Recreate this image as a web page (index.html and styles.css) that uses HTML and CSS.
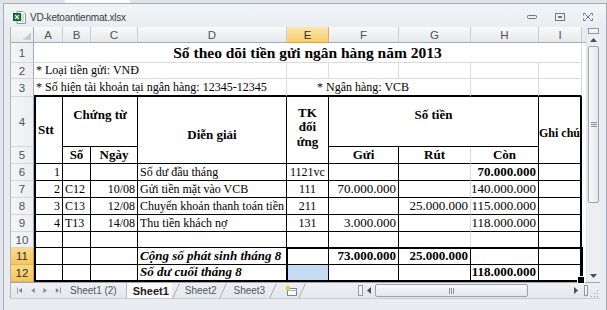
FILE: index.html
```html
<!DOCTYPE html>
<html>
<head>
<meta charset="utf-8">
<link rel="stylesheet" href="styles.css">
</head>
<body>
<div class="topstrip"><div class="toptab"></div></div>
<div class="window">
  <div class="titlebar">
    <svg class="xlicon" width="13" height="13" viewBox="0 0 13 13">
      <path d="M4 0.5h6l2.5 2.5v9.5h-8.5z" fill="#fff" stroke="#8a96a3"/>
      <path d="M7 4h4M7 6h4M7 8h4M7 10h4" stroke="#9bc29b" stroke-width="1"/>
      <rect x="0.5" y="2.5" width="7" height="7" fill="#1f7a3a" stroke="#145a2a"/>
      <path d="M2.2 4.2l3.6 3.6M5.8 4.2l-3.6 3.6" stroke="#fff" stroke-width="1.2"/>
    </svg>
    <span class="wtitle">VD-ketoantienmat.xlsx</span>
    <div class="wctl">
      <svg width="10" height="6" viewBox="0 0 10 6"><rect x="0.5" y="1.5" width="9" height="3" rx="1" fill="none" stroke="#6f7782"/></svg>
      <svg width="10" height="8" viewBox="0 0 10 8"><rect x="0.5" y="0.5" width="9" height="7" fill="none" stroke="#6f7782"/><rect x="3" y="3" width="4" height="2" fill="#6f7782"/></svg>
      <svg width="10" height="8" viewBox="0 0 10 8"><path d="M0.5 2.5v-2h2M7.5 0.5h2v2M9.5 5.5v2h-2M2.5 7.5h-2v-2M2.5 1.5l5 5M7.5 1.5l-5 5" fill="none" stroke="#6f7782"/></svg>
    </div>
  </div>
  <div class="main">
    <div class="sheet">
      <div class="corner"><svg width="8" height="8" viewBox="0 0 8 8"><path d="M8 0V8H0z" fill="#c9ccd1"/></svg></div>
      <div class="hc">A</div><div class="hc">B</div><div class="hc">C</div><div class="hc">D</div><div class="hc sel">E</div><div class="hc">F</div><div class="hc">G</div><div class="hc">H</div><div class="hc">I</div>

      <div class="rh">1</div>
      <div class="c title span9">Sổ theo dõi tiền gửi ngân hàng năm 2013</div>

      <div class="rh">2</div>
      <div class="c span4">* Loại tiền gửi: VNĐ</div>
      <div class="c"></div><div class="c"></div><div class="c"></div><div class="c"></div><div class="c"></div>

      <div class="rh">3</div>
      <div class="c span4 b2">* Số hiện tài khoản tại ngân hàng: 12345-12345</div>
      <div class="c span3 b2 indent">* Ngân hàng: VCB</div>
      <div class="c b2"></div><div class="c b2"></div>

      <div class="rh">4</div>
      <div class="c h rspan2 l2 r1 b1 stt">Stt</div>
      <div class="c h span2 r1 b1 up">Chứng từ</div>
      <div class="c h rspan2 r1 b1 down">Diễn giải</div>
      <div class="c h rspan2 r1 b1 wrap">TK<br>đối<br>ứng</div>
      <div class="c h span3 r1 b1 up">Số tiền</div>
      <div class="c h rspan2 r2 b1 ghichu">Ghi chú</div>

      <div class="rh">5</div>
      <div class="c h r1 b1">Số</div>
      <div class="c h r1 b1">Ngày</div>
      <div class="c h r1 b1">Gửi</div>
      <div class="c h b1">Rút</div>
      <div class="c h r1 b1">Còn</div>

      <div class="rh">6</div>
      <div class="c l2 r1 b1 ar">1</div><div class="c r1 b1"></div><div class="c r1 b1"></div>
      <div class="c r1 b1">Số dư đầu tháng</div><div class="c r1 b1 ac">1121vc</div>
      <div class="c r1 b1"></div><div class="c b1"></div><div class="c r1 b1 n bold">70.000.000</div><div class="c r2 b1"></div>

      <div class="rh">7</div>
      <div class="c l2 r1 b1 ar">2</div><div class="c r1 b1">C12</div><div class="c r1 b1 ar">10/08</div>
      <div class="c r1 b1">Gửi tiền mặt vào VCB</div><div class="c r1 b1 ac">111</div>
      <div class="c r1 b1 n">70.000.000</div><div class="c b1"></div><div class="c r1 b1 n">140.000.000</div><div class="c r2 b1"></div>

      <div class="rh">8</div>
      <div class="c l2 r1 b1 ar">3</div><div class="c r1 b1">C13</div><div class="c r1 b1 ar">12/08</div>
      <div class="c r1 b1">Chuyển khoản thanh toán tiền mua hàng</div><div class="c r1 b1 ac">211</div>
      <div class="c r1 b1"></div><div class="c b1 n">25.000.000</div><div class="c r1 b1 n">115.000.000</div><div class="c r2 b1"></div>

      <div class="rh">9</div>
      <div class="c l2 r1 b1 ar">4</div><div class="c r1 b1">T13</div><div class="c r1 b1 ar">14/08</div>
      <div class="c r1 b1">Thu tiền khách nợ</div><div class="c r1 b1 ac">131</div>
      <div class="c r1 b1 n">3.000.000</div><div class="c b1"></div><div class="c r1 b1 n">118.000.000</div><div class="c r2 b1"></div>

      <div class="rh">10</div>
      <div class="c l2 r1 b1"></div><div class="c r1 b1"></div><div class="c r1 b1"></div>
      <div class="c r1 b1"></div><div class="c r1 b1"></div>
      <div class="c r1 b1"></div><div class="c b1"></div><div class="c r1 b1"></div><div class="c r2 b1"></div>

      <div class="rh sel">11</div>
      <div class="c l2 r1 b1"></div><div class="c r1 b1"></div><div class="c r1 b1"></div>
      <div class="c r1 b1 bi">Cộng số phát sinh tháng 8</div><div class="c r1 b1"></div>
      <div class="c r1 b1 n bold">73.000.000</div><div class="c r1 b1 n bold">25.000.000</div><div class="c r1 b1"></div><div class="c r2 b1"></div>

      <div class="rh sel">12</div>
      <div class="c l2 r1 b2"></div><div class="c r1 b2"></div><div class="c r1 b2"></div>
      <div class="c r1 b2 bi">Số dư cuối tháng 8</div><div class="c r1 b2 selfill"></div>
      <div class="c r1 b2"></div><div class="c r1 b2"></div><div class="c r1 b2 n bold">118.000.000</div><div class="c r2 b2"></div>

      <div class="selection"></div>
    </div>
    <div class="filler"></div>
    <div class="vscroll">
      <div class="vsplit"></div>
      <div class="vbtn"><svg width="7" height="4" viewBox="0 0 7 4"><path d="M0 4L3.5 0L7 4z" fill="#4a4f56"/></svg></div>
      <div class="vthumb"><svg width="6" height="5" viewBox="0 0 6 5"><path d="M0 0.5h6M0 2.5h6M0 4.5h6" stroke="#8b939d"/></svg></div>
      <div class="vtrack"></div>
      <div class="vbtn"><svg width="7" height="4" viewBox="0 0 7 4"><path d="M0 0L3.5 4L7 0z" fill="#4a4f56"/></svg></div>
    </div>
  </div>
  <div class="tabbar">
    <div class="nav">
      <svg width="7" height="7" viewBox="0 0 7 7"><path d="M0.5 0v7" stroke="#7d848d"/><path d="M6 0.5L2 3.5L6 6.5z" fill="#7d848d"/></svg>
      <svg width="5" height="7" viewBox="0 0 5 7"><path d="M4.5 0.5L0.5 3.5L4.5 6.5z" fill="#7d848d"/></svg>
      <svg width="5" height="7" viewBox="0 0 5 7"><path d="M0.5 0.5L4.5 3.5L0.5 6.5z" fill="#7d848d"/></svg>
      <svg width="7" height="7" viewBox="0 0 7 7"><path d="M1 0.5L5 3.5L1 6.5z" fill="#7d848d"/><path d="M6.5 0v7" stroke="#7d848d"/></svg>
    </div>
    <div class="tabs">
      <div class="tab t1">Sheet1 (2)</div>
      <div class="tab active">Sheet1</div>
      <svg class="sep" width="8" height="16" viewBox="0 0 8 16"><path d="M0.5 15.5L7.5 0.5" stroke="#a7aeb7"/></svg>
      <div class="tab t2">Sheet2</div>
      <svg class="sep" width="8" height="16" viewBox="0 0 8 16"><path d="M0.5 15.5L7.5 0.5" stroke="#a7aeb7"/></svg>
      <div class="tab t3">Sheet3</div>
      <svg class="sep" width="8" height="16" viewBox="0 0 8 16"><path d="M0.5 15.5L7.5 0.5" stroke="#a7aeb7"/></svg>
      <svg class="ins" width="12" height="11" viewBox="0 0 12 11"><rect x="2.5" y="3.5" width="9" height="7" fill="#fff" stroke="#6d86a6"/><path d="M2.5 5.5h9" stroke="#9fb6d3"/><circle cx="3" cy="3" r="2.3" fill="#f6c343"/></svg>
      <svg class="sep" width="8" height="16" viewBox="0 0 8 16"><path d="M0.5 15.5L7.5 0.5" stroke="#a7aeb7"/></svg>
    </div>
    <div class="hscroll">
      <div class="hsplit"></div>
      <div class="hbtn"><svg width="4" height="7" viewBox="0 0 4 7"><path d="M4 0L0 3.5L4 7z" fill="#4a4f56"/></svg></div>
      <div class="hthumb"><svg width="5" height="6" viewBox="0 0 5 6"><path d="M0.5 0v6M2.5 0v6M4.5 0v6" stroke="#8b939d"/></svg></div>
      <div class="htrack"></div>
      <div class="hbtn"><svg width="4" height="7" viewBox="0 0 4 7"><path d="M0 0L4 3.5L0 7z" fill="#4a4f56"/></svg></div>
      <div class="hsplit2"></div>
      <div class="grip"><svg width="8" height="8" viewBox="0 0 8 8"><path d="M6 1h1v1h-1zM6 4h1v1h-1zM3 4h1v1h-1zM6 7h1v1h-1zM3 7h1v1h-1zM0 7h1v1h-1z" fill="#9aa2ac"/></svg></div>
    </div>
  </div>
</div>
</body>
</html>
```
FILE: styles.css
```css
* { box-sizing: border-box; margin: 0; padding: 0; }
html, body { width: 607px; height: 310px; overflow: hidden; }
body { background: #e3e7ec; font-family: "Liberation Sans", Arial, sans-serif; }

.topstrip { height: 3px; display: flex; background: #dfe3e8; }
.toptab { margin-left: 65px; width: 65px; background: #fbfcfd; }

.window {
  margin-left: 3px; width: 604px; height: 307px;
  border: 1px solid #a3adb9; border-bottom: none;
  background: #e9edf1;
  padding: 0 6px 0 6px;
  display: flex; flex-direction: column;
}

.titlebar {
  height: 23px; display: flex; align-items: center;
  margin: 0 -6px; padding: 3px 8px 0 9px;
  background: linear-gradient(#f2f4f7, #e9edf1);
}
.xlicon { flex: none; }
.wtitle { margin-left: 4px; font-size: 10px; color: #3c3c3c; letter-spacing: -0.2px; }
.wctl { margin-left: auto; display: flex; align-items: center; gap: 18px; padding-right: 5px; }

.main { display: flex; height: 255px; border-left: 1px solid #aab3be; }

.sheet {
  position: relative;
  display: grid;
  grid-template-columns: 23px 29px 28px 47px 149px 42px 70px 72px 68px 43px;
  grid-template-rows: 16px 20px 16px 18px 50px 17px 17px 17px 17px 17px 16px 17px 17px;
  background: #fff;
}
.filler { width: 4px; background: linear-gradient(#eceef1 0, #e6e8eb 15px, #a4abb4 15px, #a4abb4 16px, #fff 16px); }

.corner {
  background: linear-gradient(#f6f7f8, #e8eaed);
  border-right: 1px solid #a4abb4; border-bottom: 1px solid #a4abb4;
  display: flex; align-items: flex-end; justify-content: flex-end; padding: 0 2px 2px 0;
}
.hc {
  display: flex; align-items: center; justify-content: center;
  font-size: 11.5px; color: #4f5359;
  background: linear-gradient(#f8f9fa, #e6e8eb);
  border-right: 1px solid #c9cdd3; border-bottom: 1px solid #a4abb4;
}
.hc.sel { background: linear-gradient(#fbe6ae, #f6cd6e); color: #2d2d2d; border-bottom-color: #e0a33c; border-right-color: #dcb060; }
.rh {
  display: flex; align-items: center; justify-content: center;
  font-size: 11.5px; color: #4f5359;
  background: linear-gradient(to right, #f4f5f7, #eceef1);
  border-right: 1px solid #a4abb4; border-bottom: 1px solid #d3d7dc;
}
.rh.sel { background: linear-gradient(#fbdb8a, #f5c65d); color: #2d2d2d; border-bottom-color: #e3b458; border-right-color: #d99a30; }

.c {
  font-family: "Liberation Serif", "Times New Roman", serif; font-size: 12px; color: #000;
  display: flex; align-items: flex-end; padding: 0 2px 1px 2px;
  white-space: nowrap; overflow: hidden;
  border-right: 1px solid #dadcdf; border-bottom: 1px solid #dadcdf;
  line-height: 14px;
}
.span2 { grid-column: span 2; }
.span3 { grid-column: span 3; }
.span4 { grid-column: span 4; }
.span9 { grid-column: span 9; }
.rspan2 { grid-row: span 2; }

.title { justify-content: center; align-items: center; font-size: 15.5px; font-weight: bold; padding-top: 2px; }
.indent { padding-left: 30px; }

.r1 { border-right: 1px solid #000; }
.r2 { border-right: 2px solid #000; }
.b1 { border-bottom: 1px solid #000; }
.b2 { border-bottom: 2px solid #000; }
.l2 { border-left: 2px solid #000; }

.h { font-weight: bold; font-size: 13px; justify-content: center; align-items: center; padding: 0 1px; }
.stt { justify-content: flex-start; padding-left: 2px; }
.up { padding-bottom: 14px; }
.down { padding-top: 9px; }
.ghichu { padding: 5px 0 0 0; justify-content: flex-start; font-size: 12px; }
.wrap { white-space: normal; text-align: center; line-height: 14.5px; padding-bottom: 5px; }

.ar { justify-content: flex-end; }
.ac { justify-content: center; }
.n { justify-content: flex-end; font-size: 13px; }
.bold { font-weight: bold; }
.bi { font-weight: bold; font-style: italic; font-size: 13px; }
.selfill { background: #c5daf3; }

.selection {
  position: absolute; grid-column: 6; grid-row: 12 / span 2;
  top: -1px; left: -1px; right: -1px; bottom: 0;
  border: 2px solid #000;
}
.selection::after {
  content: ""; position: absolute; right: -4px; bottom: -4px;
  width: 6px; height: 6px; background: #000; border: 1px solid #fff;
}

.vscroll { width: 14px; display: flex; flex-direction: column; background: #eceef1; border-left: 1px solid #e1e4e8; }
.vsplit { height: 6px; margin: 1px 1px 0; border: 1px solid #8e97a2; background: #f3f4f6; }
.vbtn { height: 12px; display: flex; align-items: center; justify-content: center; }
.vthumb {
  height: 157px; margin: 0 1px; border: 1px solid #9aa3ad; border-radius: 2px;
  background: linear-gradient(to right, #f8f9fa, #e4e7eb);
  display: flex; align-items: center; justify-content: center;
}
.vtrack { flex: 1; }

.tabbar {
  height: 17px; display: flex; align-items: center;
  border-left: 1px solid #aab3be; border-top: 1px solid #9ea7b2; border-bottom: 1px solid #c6cdd5;
  background: linear-gradient(#eef0f3, #e4e7eb);
}
.nav { width: 50px; flex: none; display: flex; align-items: center; gap: 8px; padding-left: 6px; }
.tabs { display: flex; align-items: center; height: 100%; width: 246px; flex: none; }
.tab { flex: none; white-space: nowrap; font-size: 10px; color: #52575e; height: 100%; display: flex; align-items: center; }
.t1 { margin-left: 3px; padding: 0 9px 0 6px; border-right: 1px solid #b6bcc4; }
.tab.active { font-weight: bold; font-size: 11px; color: #1c1c1c; background: #fbfbfc; padding: 0 3px 0 6px; }
.t2 { padding: 0 3px 0 5px; }
.t3 { padding: 0 4px 0 6px; }
.sep { flex: none; }
.ins { flex: none; margin: 0 1px 0 8px; }
.hscroll { margin-left: auto; width: 243px; height: 100%; display: flex; align-items: center; }
.hsplit { width: 5px; height: 11px; border: 1px solid #8e97a2; background: #f3f4f6; margin-left: 1px; }
.hbtn { width: 12px; display: flex; align-items: center; justify-content: center; }
.hthumb {
  width: 153px; height: 13px; border: 1px solid #9aa3ad; border-radius: 2px;
  background: linear-gradient(#f8f9fa, #e4e7eb);
  display: flex; align-items: center; justify-content: center;
}
.htrack { flex: 1; }
.hsplit2 { width: 4px; height: 11px; border: 1px solid #8e97a2; background: #f3f4f6; margin: 0 2px; }
.grip { width: 10px; display: flex; align-items: flex-end; justify-content: center; height: 100%; padding-bottom: 1px; }
```
